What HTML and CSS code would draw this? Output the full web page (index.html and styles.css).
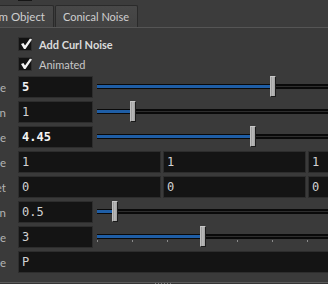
FILE: index.html
```html
<!DOCTYPE html>
<html>
<head>
<meta charset="utf-8">
<link rel="stylesheet" href="styles.css">
</head>
<body>
<div class="panel">
  <div class="topstrip"><div class="stub"></div></div>
  <div class="tabbar">
    <div class="tabclip"><div class="tab">Custom Object</div></div>
    <div class="tab">Conical Noise</div>
  </div>
  <div class="content">
    <div class="checkrow">
      <span class="check"><svg width="12" height="12" viewBox="0 0 12 12"><path d="M1 6 L3.5 5 L5 7.5 L10 0.5 L12 1.5 L5.5 11 L4 11 Z" fill="#f2f2f2"/></svg></span>
      <span class="checklabel bold">Add Curl Noise</span>
    </div>
    <div class="checkrow">
      <span class="check"><svg width="12" height="12" viewBox="0 0 12 12"><path d="M1 6 L3.5 5 L5 7.5 L10 0.5 L12 1.5 L5.5 11 L4 11 Z" fill="#f2f2f2"/></svg></span>
      <span class="checklabel">Animated</span>
    </div>

    <div class="parm">
      <div class="label"><span>Swirl Size</span></div>
      <div class="field short strong">5</div>
      <div class="slider" style="--v:5"><div class="groove"><div class="fill"></div></div><div class="handle"></div></div>
    </div>
    <div class="parm">
      <div class="label"><span>Pulse Duration</span></div>
      <div class="field short">1</div>
      <div class="slider" style="--v:1"><div class="groove"><div class="fill"></div></div><div class="handle"></div></div>
    </div>
    <div class="parm">
      <div class="label"><span>Scale</span></div>
      <div class="field short strong">4.45</div>
      <div class="slider" style="--v:4.45"><div class="groove"><div class="fill"></div></div><div class="handle"></div></div>
    </div>
    <div class="parm">
      <div class="label"><span>Frequency Scale</span></div>
      <div class="triple">
        <div class="field">1</div><div class="field">1</div><div class="field">1</div>
      </div>
    </div>
    <div class="parm">
      <div class="label"><span>Offset</span></div>
      <div class="triple">
        <div class="field">0</div><div class="field">0</div><div class="field">0</div>
      </div>
    </div>
    <div class="parm">
      <div class="label"><span>Roughness Attenuation</span></div>
      <div class="field short">0.5</div>
      <div class="slider" style="--v:0.5"><div class="groove"><div class="fill"></div></div><div class="handle"></div></div>
    </div>
    <div class="parm">
      <div class="label"><span>Turbulence</span></div>
      <div class="field short">3</div>
      <div class="slider ticked" style="--v:3"><div class="groove"><div class="fill"></div></div><div class="ticks"><i></i><i></i><i></i><i></i><i></i><i></i><i></i><i></i></div><div class="handle"></div></div>
    </div>
    <div class="parm">
      <div class="label"><span>Position Attribute</span></div>
      <div class="field wide">P</div>
    </div>
  </div>
  <div class="footer"><div class="grip"></div></div>
</div>
</body>
</html>
```

FILE: styles.css
```css
html, body {
  margin: 0;
  padding: 0;
}
body {
  width: 328px;
  height: 284px;
  overflow: hidden;
  background: #3a3a3a;
  font-family: Lato, "Liberation Sans", sans-serif;
  font-size: 11px;
  color: #c8c8c8;
}
.panel {
  width: 328px;
  height: 284px;
  display: flex;
  flex-direction: column;
  overflow: hidden;
}
.topstrip {
  height: 5px;
  background: #3c3c3c;
}
.stub {
  margin-left: 18px;
  width: 14px;
  height: 1px;
  background: #161616;
}
.tabbar {
  display: flex;
  height: 22px;
  background: #3c3c3c;
  border-bottom: 1px solid #555;
  gap: 1px;
}
.tabclip {
  width: 54px;
  display: flex;
  justify-content: flex-end;
  overflow: hidden;
  flex-shrink: 0;
}
.tab {
  flex-shrink: 0;
  height: 22px;
  box-sizing: border-box;
  padding: 0 8px 0 7px;
  display: flex;
  align-items: center;
  background: linear-gradient(#484848, #424242);
  border: 1px solid #2a2a2a;
  border-bottom: none;
  border-radius: 2px 2px 0 0;
  color: #cfcfcf;
  white-space: nowrap;
}
.tabclip .tab {
  font-size: 11.5px;
}
.content {
  padding-top: 6px;
  display: flex;
  flex-direction: column;
}
.checkrow {
  display: flex;
  align-items: center;
  height: 20px;
  padding-left: 18px;
  gap: 7px;
}
.check {
  position: relative;
  width: 14px;
  height: 14px;
  box-sizing: border-box;
  background: #121212;
  border: 1px solid #2e2e2e;
}
.check svg {
  position: absolute;
  left: 1px;
  top: 0;
}
.checklabel {
  color: #c8c8c8;
}
.checklabel.bold {
  font-weight: bold;
  color: #dcdcdc;
}
.content .checkrow + .parm {
  margin-top: 2px;
}
.parm {
  display: flex;
  align-items: flex-start;
  height: 22px;
  margin-bottom: 3px;
}
.label {
  width: 6px;
  flex-shrink: 0;
  height: 22px;
  display: flex;
  justify-content: flex-end;
  align-items: center;
  overflow: hidden;
  margin-right: 12px;
  color: #b4b4b4;
  font-size: 11.5px;
  white-space: nowrap;
}
.label span {
  flex-shrink: 0;
}
.field {
  box-sizing: border-box;
  height: 22px;
  background: #141414;
  border: 1px solid #2d2d2d;
  font-family: "DejaVu Sans Mono", monospace;
  font-size: 12px;
  color: #d2d2d2;
  padding-left: 3px;
  display: flex;
  align-items: center;
  flex-shrink: 0;
}
.field.strong {
  font-weight: bold;
  color: #f4f4f4;
}
.field.short {
  width: 75px;
}
.field.wide {
  width: 340px;
}
.triple {
  display: grid;
  grid-template-columns: 142.5px 142.5px 142.5px;
  gap: 2.5px;
  flex-shrink: 0;
}
.slider {
  position: relative;
  width: 350px;
  height: 22px;
  margin-left: 4px;
  flex-shrink: 0;
}
.groove {
  position: relative;
  margin-top: 8px;
  height: 5px;
  background: linear-gradient(#0a0a0a 0 2px, #2e2e2e 2px 3px, #0a0a0a 3px);
}
.fill {
  position: absolute;
  left: 0;
  top: 1px;
  height: 3px;
  width: calc(var(--v) * 35px - 2px);
  background: #1f5ea6;
}
.handle {
  position: absolute;
  top: 0;
  left: calc(var(--v) * 35px - 2.5px);
  width: 6px;
  height: 21px;
  box-sizing: border-box;
  background: linear-gradient(90deg, #939393, #bababa 40%, #a0a0a0);
  border-top: 1px solid #c8c8c8;
  border-left: 1px solid #c0c0c0;
  border-right: 1px solid #1a1a1a;
  border-bottom: 1px solid #1a1a1a;
}
.ticks {
  display: flex;
  gap: 34px;
  margin-top: 1px;
}
.ticks i {
  display: block;
  width: 1px;
  height: 2px;
  background: #8a8a8a;
}
.footer {
  margin-top: auto;
  border-top: 1px solid #5a5a5a;
  height: 1px;
  background: #343434;
  display: flex;
  justify-content: center;
}
.grip {
  width: 18px;
  height: 1px;
  background: repeating-linear-gradient(90deg, #7a7a7a 0 1px, transparent 1px 3px);
}
```
